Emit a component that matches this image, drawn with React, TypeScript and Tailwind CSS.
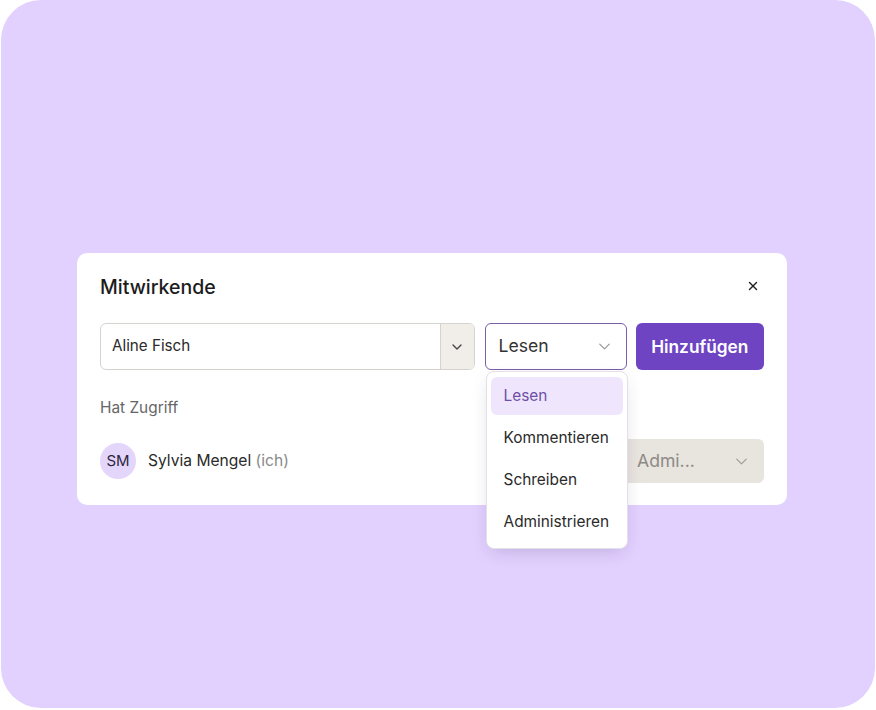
import { ChevronDown, X } from 'lucide-react'

const roles = ['Lesen', 'Kommentieren', 'Schreiben', 'Administrieren']

function RoleMenu() {
  return (
    <div className="absolute left-[1px] top-[48px] z-10 flex w-[142px] flex-col gap-1 rounded-lg border border-[#e4e0ea] bg-white px-1 pb-[7px] pt-[5px] shadow-[0_6px_18px_-6px_rgba(60,40,100,0.25)]">
      {roles.map((role, i) => (
        <div
          key={role}
          className={[
            'flex h-[38px] items-center rounded-md px-[13px] text-[15.4px]',
            i === 0 ? 'bg-[#efe6fd] text-[#6d4fa6]' : 'text-[#2a2a2a]',
          ].join(' ')}
        >
          {role}
        </div>
      ))}
    </div>
  )
}

export default function App() {
  return (
    <div className="h-[710px] w-[876px] bg-white font-['Inter',sans-serif]">
      <div className="ml-[1px] h-[708px] w-[874px] rounded-[40px] bg-[#e2d0fe] pl-[76px] pt-[253px]">
        <div className="w-[710px] rounded-[10px] bg-white px-[23px] pb-[22px] pt-[22px]">
          <div className="flex items-center justify-between">
            <h2 className="text-[19.5px] font-medium leading-6 text-[#1c1c1c]">Mitwirkende</h2>
            <X className="mb-[3px] mr-[4px] size-[14px] text-[#222]" strokeWidth={2.4} />
          </div>

          <div className="mt-[24px] flex items-center">
            <div className="flex h-[47px] w-[376px] overflow-hidden rounded-md border border-[#d6d3cf]">
              <div className="flex flex-1 items-center px-[11px] text-[15.2px] text-[#2a2a2a]">Aline Fisch</div>
              <div className="grid w-[34px] place-items-center border-l border-[#d6d3cf] bg-[#f1eee9]">
                <ChevronDown className="size-[16px] text-[#444]" strokeWidth={2} />
              </div>
            </div>

            <div className="relative ml-[10px]">
              <div className="flex h-[47px] w-[142px] items-center justify-between rounded-md border border-[#7a5ea8] pl-[13px] pr-[12px]">
                <span className="text-[17.6px] text-[#333]">Lesen</span>
                <ChevronDown className="size-[19px] text-[#9a9a9a]" strokeWidth={1.6} />
              </div>
              <RoleMenu />
            </div>

            <button
              type="button"
              className="ml-[9px] h-[47px] w-[129px] rounded-md bg-[#6e44c2] text-[17.3px] font-semibold text-white"
            >
              Hinzufügen
            </button>
          </div>

          <p className="mt-[28px] text-[15.4px] leading-5 text-[#666]">Hat Zugriff</p>

          <div className="mt-[21px] flex items-center justify-between">
            <div className="flex items-center gap-[12px]">
              <div className="grid size-[36px] place-items-center rounded-full bg-[#e4d5fb] text-[15px] text-[#2c2540]">
                SM
              </div>
              <span className="text-[15.6px] text-[#2a2a2a]">
                Sylvia Mengel <span className="text-[#8a8a8a]">(ich)</span>
              </span>
            </div>
            <div className="flex h-[44px] w-[160px] items-center justify-between rounded-md bg-[#e8e4de] pl-[33px] pr-[13px]">
              <span className="text-[17.6px] text-[#8d8a86]">Admi...</span>
              <ChevronDown className="size-[19px] text-[#a29f9a]" strokeWidth={1.6} />
            </div>
          </div>
        </div>
      </div>
    </div>
  )
}
